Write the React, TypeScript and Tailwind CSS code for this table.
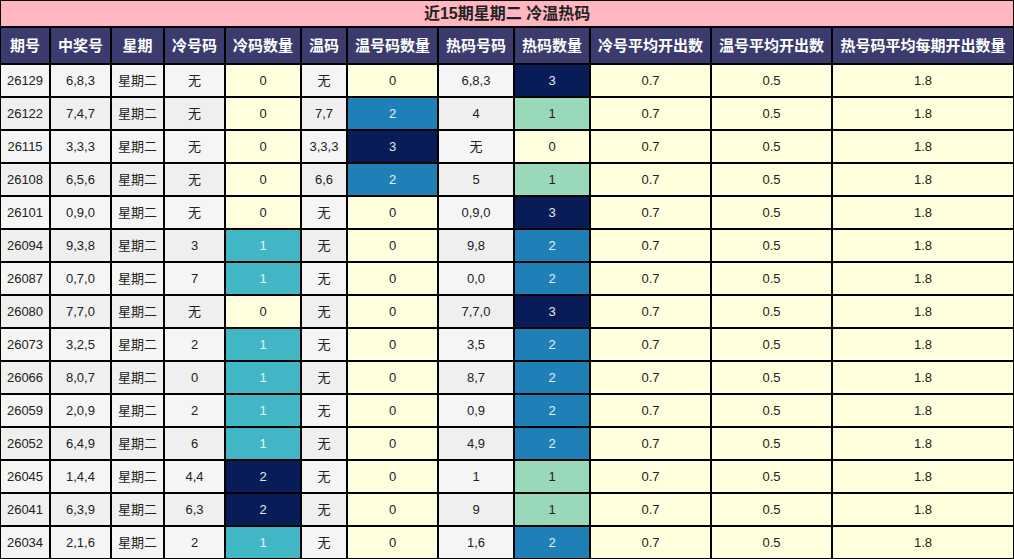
import React from "react";

type Row = [string, string, string, string, number, string, number, string, number];

const rows: Row[] = [
  ["26129", "6,8,3", "星期二", "无", 0, "无", 0, "6,8,3", 3],
  ["26122", "7,4,7", "星期二", "无", 0, "7,7", 2, "4", 1],
  ["26115", "3,3,3", "星期二", "无", 0, "3,3,3", 3, "无", 0],
  ["26108", "6,5,6", "星期二", "无", 0, "6,6", 2, "5", 1],
  ["26101", "0,9,0", "星期二", "无", 0, "无", 0, "0,9,0", 3],
  ["26094", "9,3,8", "星期二", "3", 1, "无", 0, "9,8", 2],
  ["26087", "0,7,0", "星期二", "7", 1, "无", 0, "0,0", 2],
  ["26080", "7,7,0", "星期二", "无", 0, "无", 0, "7,7,0", 3],
  ["26073", "3,2,5", "星期二", "2", 1, "无", 0, "3,5", 2],
  ["26066", "8,0,7", "星期二", "0", 1, "无", 0, "8,7", 2],
  ["26059", "2,0,9", "星期二", "2", 1, "无", 0, "0,9", 2],
  ["26052", "6,4,9", "星期二", "6", 1, "无", 0, "4,9", 2],
  ["26045", "1,4,4", "星期二", "4,4", 2, "无", 0, "1", 1],
  ["26041", "6,3,9", "星期二", "6,3", 2, "无", 0, "9", 1],
  ["26034", "2,1,6", "星期二", "2", 1, "无", 0, "1,6", 2],
];

const headers = [
  "期号",
  "中奖号",
  "星期",
  "冷号码",
  "冷码数量",
  "温码",
  "温号码数量",
  "热码号码",
  "热码数量",
  "冷号平均开出数",
  "温号平均开出数",
  "热号码平均每期开出数量",
];

const widths = [50, 61, 53, 61, 76, 46, 91, 76, 76, 121, 121, 182];

const YELLOW = "bg-[#ffffdd] text-[#222]";

function coldCls(v: number) {
  if (v === 0) return YELLOW;
  if (v === 1) return "bg-[#41b6c4] text-[#e6f6f8]";
  return "bg-[#081d58] text-[#e8e8e8]";
}
function warmCls(v: number) {
  if (v === 0) return YELLOW;
  if (v === 2) return "bg-[#1f80b8] text-[#e8eef4]";
  return "bg-[#081d58] text-[#e8e8e8]";
}
function hotCls(v: number) {
  if (v === 0) return YELLOW;
  if (v === 1) return "bg-[#99d8b9] text-[#222]";
  if (v === 2) return "bg-[#1f80b8] text-[#e8eef4]";
  return "bg-[#081d58] text-[#e8e8e8]";
}

const cell = "border border-black text-center align-middle p-0";

export default function App() {
  return (
    <div
      className="w-[1014px] h-[559px] bg-white overflow-hidden"
      style={{ fontFamily: '"Liberation Sans", Arial, "Noto Sans CJK SC", sans-serif' }}
    >
      <table className="table-fixed border-separate border-spacing-0 w-[1014px]">
        <colgroup>
          {widths.map((w, i) => (
            <col key={i} style={{ width: w }} />
          ))}
        </colgroup>
        <thead>
          <tr className="h-[27px]">
            <th
              colSpan={12}
              className={`${cell} bg-[#ffb6c1] text-[#222] text-[16px] font-bold leading-none`}
            >
              近15期星期二 冷温热码
            </th>
          </tr>
          <tr className="h-[37px]">
            {headers.map((h, i) => (
              <th
                key={i}
                className={`${cell} bg-[#3c3b6e] text-white text-[15px] font-bold leading-none whitespace-nowrap`}
              >
                {h}
              </th>
            ))}
          </tr>
        </thead>
        <tbody>
          {rows.map((r, idx) => {
            const gray = idx % 2 === 0 ? "bg-[#f5f5f5]" : "bg-[#efefef]";
            const g = `${cell} ${gray} text-[#222]`;
            return (
              <tr key={idx} className="h-[33px] text-[13px]">
                <td className={g}>{r[0]}</td>
                <td className={g}>{r[1]}</td>
                <td className={g}>{r[2]}</td>
                <td className={g}>{r[3]}</td>
                <td className={`${cell} ${coldCls(r[4])}`}>{r[4]}</td>
                <td className={g}>{r[5]}</td>
                <td className={`${cell} ${warmCls(r[6])}`}>{r[6]}</td>
                <td className={g}>{r[7]}</td>
                <td className={`${cell} ${hotCls(r[8])}`}>{r[8]}</td>
                <td className={`${cell} ${YELLOW}`}>0.7</td>
                <td className={`${cell} ${YELLOW}`}>0.5</td>
                <td className={`${cell} ${YELLOW}`}>1.8</td>
              </tr>
            );
          })}
        </tbody>
      </table>
    </div>
  );
}
